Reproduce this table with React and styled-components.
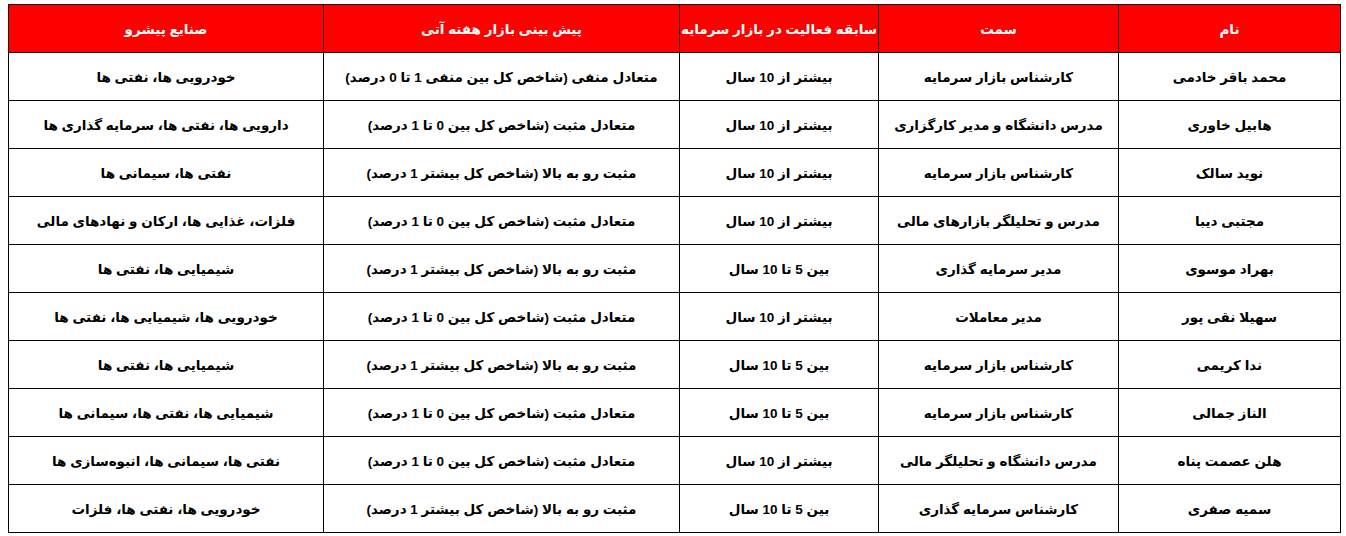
import React from 'react';
import styled, { createGlobalStyle } from 'styled-components';

const GlobalStyle = createGlobalStyle`
  html, body {
    margin: 0;
    padding: 0;
    background: #ffffff;
  }
`;

const Sheet = styled.div`
  width: 1346px;
  height: 536px;
  box-sizing: border-box;
  padding: 4px 6px 0 8px;
  overflow: hidden;
  background: #ffffff;
`;

const Table = styled.table`
  direction: rtl;
  width: 1332px;
  border-collapse: collapse;
  table-layout: fixed;
  font-family: "Liberation Sans", "DejaVu Sans", sans-serif;
  font-weight: bold;
  font-size: 13.5px;
  color: #000000;
`;

const Col = styled.col`
  width: ${(p) => p.$w}px;
`;

const HeadCell = styled.th`
  box-sizing: border-box;
  height: 48px;
  padding: 0;
  background: #ff0000;
  color: #ffffff;
  font-weight: bold;
  text-align: center;
  vertical-align: middle;
  white-space: nowrap;
  border: 1.5px solid #2a0000;
`;

const Cell = styled.td`
  box-sizing: border-box;
  height: 48px;
  padding: 0;
  text-align: center;
  vertical-align: middle;
  white-space: nowrap;
  border: 1.5px solid #000000;
`;

const columns = [
  { title: 'نام', width: 222 },
  { title: 'سمت', width: 240 },
  { title: 'سابقه فعالیت در بازار سرمایه', width: 199 },
  { title: 'پیش بینی بازار هفته آتی', width: 356 },
  { title: 'صنایع پیشرو', width: 315 },
];

const negative = 'متعادل منفی (شاخص کل بین  منفی 1 تا 0 درصد)';
const balanced = 'متعادل مثبت (شاخص کل بین 0 تا 1 درصد)';
const rising = 'مثبت رو به بالا (شاخص کل بیشتر 1 درصد)';
const overTen = 'بیشتر از 10 سال';
const fiveToTen = 'بین 5 تا 10 سال';

const rows = [
  ['محمد باقر خادمی', 'کارشناس بازار سرمایه', overTen, negative, 'خودرویی ها، نفتی ها'],
  ['هابیل خاوری', 'مدرس دانشگاه و مدیر کارگزاری', overTen, balanced, 'دارویی ها، نفتی ها، سرمایه گذاری ها'],
  ['نوید سالک', 'کارشناس بازار سرمایه', overTen, rising, 'نفتی ها، سیمانی ها'],
  ['مجتبی دیبا', 'مدرس و تحلیلگر بازارهای مالی', overTen, balanced, 'فلزات، غذایی ها، ارکان و نهادهای مالی'],
  ['بهراد موسوی', 'مدیر سرمایه گذاری', fiveToTen, rising, 'شیمیایی ها، نفتی ها'],
  ['سهیلا نقی پور', 'مدیر معاملات', overTen, balanced, 'خودرویی ها، شیمیایی ها، نفتی ها'],
  ['ندا کریمی', 'کارشناس بازار سرمایه', fiveToTen, rising, 'شیمیایی ها، نفتی ها'],
  ['الناز جمالی', 'کارشناس بازار سرمایه', fiveToTen, balanced, 'شیمیایی ها، نفتی ها، سیمانی ها'],
  ['هلن عصمت پناه', 'مدرس دانشگاه و تحلیلگر مالی', overTen, balanced, 'نفتی ها، سیمانی ها، انبوه‌سازی ها'],
  ['سمیه صفری', 'کارشناس سرمایه گذاری', fiveToTen, rising, 'خودرویی ها، نفتی ها، فلزات'],
];

export default function App() {
  return <>
    <GlobalStyle />
    <Sheet>
      <Table>
        <colgroup>
          {columns.map((c) => <Col key={c.title} $w={c.width} />)}
        </colgroup>
        <thead>
          <tr>
            {columns.map((c) => <HeadCell key={c.title}>{c.title}</HeadCell>)}
          </tr>
        </thead>
        <tbody>
          {rows.map((row) => (
            <tr key={row[0]}>
              {row.map((value, i) => <Cell key={i}>{value}</Cell>)}
            </tr>
          ))}
        </tbody>
      </Table>
    </Sheet>
  </>;
}
